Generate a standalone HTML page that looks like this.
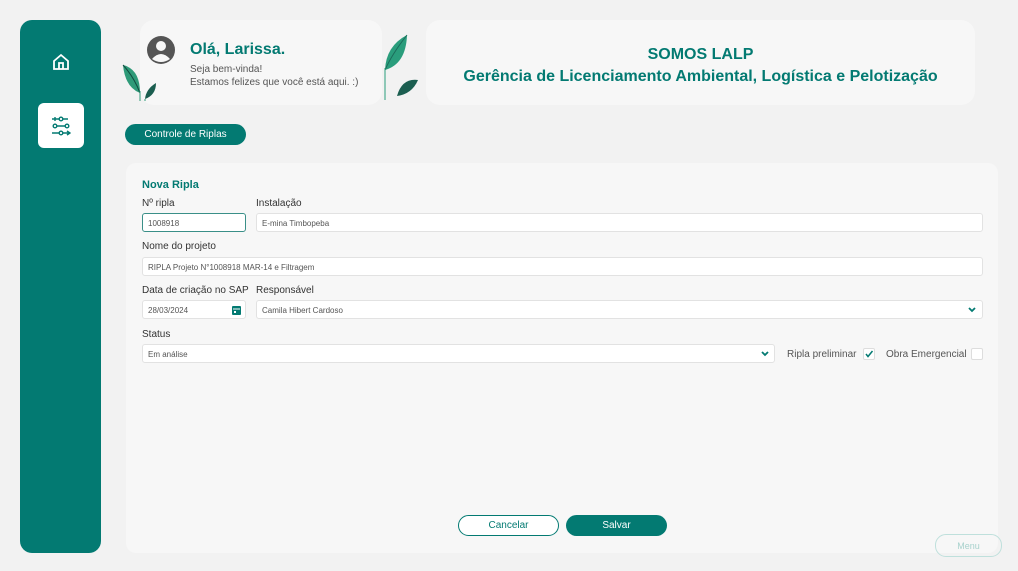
<!DOCTYPE html>
<html><head><meta charset="utf-8"><style>
*{box-sizing:border-box;margin:0;padding:0}
body{width:1018px;height:571px;background:#f2f2f2;font-family:"Liberation Sans",sans-serif;position:relative;overflow:hidden;color:#444}
.abs{position:absolute}
.side{left:20px;top:20px;width:81px;height:533px;background:#037a72;border-radius:12px}
.card{background:#f7f7f7;border-radius:14px}
.teal{color:#037a72}
.lbl{font-size:10px;color:#333}
.inp{background:#fff;border:1px solid #e2e2e2;border-radius:3px;height:19px;font-size:8px;color:#555;padding:5px 0 0 5px}
.btn{border-radius:11px;font-size:10px;text-align:center}
</style></head><body>
<div class="abs side"></div>
<svg class="abs" style="left:52px;top:53px" width="18" height="18" viewBox="0 0 18 18" fill="none" stroke="#fff" stroke-width="1.8"><path d="M2 8L9 2L16 8V16H2Z"/><path d="M7 16V10H11V16"/></svg>
<div class="abs" style="left:38px;top:103px;width:46px;height:45px;background:#fff;border-radius:6px"></div>
<svg class="abs" style="left:51px;top:116px" width="20" height="20" viewBox="0 0 20 20" fill="none" stroke="#037a72" stroke-width="1.4"><circle cx="10" cy="3" r="1.8"/><circle cx="4" cy="10" r="1.8"/><circle cx="10" cy="17" r="1.8"/><circle cx="16" cy="10" r="1.8"/><path d="M1 3H8M12 3H17M6 10H14M1 17H8M12 17H19M4 1V5M16 15L19 17L16 19"/></svg>
<div class="abs card" style="left:140px;top:20px;width:242px;height:85px"></div>
<svg class="abs" style="left:146px;top:35px" width="30" height="30" viewBox="0 0 30 30"><circle cx="15" cy="15" r="14" fill="#555"/><circle cx="15" cy="11" r="5" fill="#f7f7f7"/><path d="M6 24Q15 14 24 24Q15 30 6 24Z" fill="#f7f7f7"/></svg>
<div class="abs teal" style="left:190px;top:41px;font-size:16px;font-weight:bold">Olá, Larissa.</div>
<div class="abs" style="left:190px;top:63px;font-size:10px;color:#555;line-height:13px">Seja bem-vinda!<br>Estamos felizes que você está aqui. :)</div>
<svg class="abs" style="left:120px;top:63px" width="40" height="38" viewBox="0 0 40 38"><path d="M3 2Q20 6 20 30Q5 24 3 2Z" fill="#2e9a78"/><path d="M3 2Q14 14 20 30" stroke="#0f4a3e" stroke-width="1" fill="none"/><path d="M36 20Q36 32 25 36Q26 26 36 20Z" fill="#1b5e50"/><path d="M20 28V38M25 36V38" stroke="#2e9a78"/></svg>
<svg class="abs" style="left:380px;top:34px" width="40" height="66" viewBox="0 0 40 66"><path d="M27 1Q6 12 5 36Q26 30 27 1Z" fill="#2a9d7c"/><path d="M27 1Q12 20 5 36" stroke="#1b6b5a" fill="none"/><path d="M5 34V66" stroke="#2a9d7c"/><path d="M38 46Q22 44 17 62Q32 60 38 46Z" fill="#1b5e50"/></svg>
<div class="abs card" style="left:426px;top:20px;width:549px;height:85px"></div>
<div class="abs teal" style="left:426px;top:44px;width:549px;text-align:center;font-size:16px;font-weight:bold;line-height:22px">SOMOS LALP<br>Gerência de Licenciamento Ambiental, Logística e Pelotização</div>
<div class="abs btn" style="left:125px;top:124px;width:121px;height:21px;background:#037a72;color:#fff;padding-top:5px">Controle de Riplas</div>
<div class="abs card" style="left:126px;top:163px;width:872px;height:390px;border-radius:10px"></div>
<div class="abs teal" style="left:142px;top:179px;font-size:11px;font-weight:bold">Nova Ripla</div>
<div class="abs lbl" style="left:142px;top:198px">Nº ripla</div>
<div class="abs lbl" style="left:256px;top:198px">Instalação</div>
<div class="abs inp" style="left:142px;top:213px;width:104px;border-color:#3a8f88">1008918</div>
<div class="abs inp" style="left:256px;top:213px;width:727px">E-mina Timbopeba</div>
<div class="abs lbl" style="left:142px;top:241px">Nome do projeto</div>
<div class="abs inp" style="left:142px;top:257px;width:841px">RIPLA Projeto N°1008918 MAR-14 e Filtragem</div>
<div class="abs lbl" style="left:142px;top:285px">Data de criação no SAP</div>
<div class="abs lbl" style="left:256px;top:285px">Responsável</div>
<div class="abs inp" style="left:142px;top:300px;width:104px">28/03/2024</div>
<svg class="abs" style="left:232px;top:305px" width="9" height="10" viewBox="0 0 9 10"><rect x="0" y="1" width="9" height="9" rx="1" fill="#037a72"/><rect x="1" y="3.5" width="7" height="1" fill="#fff"/><rect x="2" y="6" width="2" height="2" fill="#fff"/></svg>
<div class="abs inp" style="left:256px;top:300px;width:727px">Camila Hibert Cardoso</div>
<div class="abs lbl" style="left:142px;top:329px">Status</div>
<div class="abs inp" style="left:142px;top:344px;width:633px">Em análise</div>
<svg class="abs" style="left:968px;top:307px" width="8" height="6" viewBox="0 0 8 6"><path d="M1 1L4 4L7 1" stroke="#037a72" stroke-width="1.8" fill="none"/></svg>
<svg class="abs" style="left:761px;top:351px" width="8" height="6" viewBox="0 0 8 6"><path d="M1 1L4 4L7 1" stroke="#037a72" stroke-width="1.8" fill="none"/></svg>
<div class="abs lbl" style="left:787px;top:349px;color:#555">Ripla preliminar</div>
<div class="abs" style="left:863px;top:348px;width:12px;height:12px;background:#fff;border:1px solid #ddd;border-radius:2px"></div>
<svg class="abs" style="left:864px;top:349px" width="10" height="10" viewBox="0 0 10 10"><path d="M2 5L4 7.5L8.5 2" stroke="#037a72" stroke-width="1.5" fill="none"/></svg>
<div class="abs lbl" style="left:886px;top:349px;color:#555">Obra Emergencial</div>
<div class="abs" style="left:971px;top:348px;width:12px;height:12px;background:#fff;border:1px solid #ddd;border-radius:2px"></div>
<div class="abs btn" style="left:458px;top:515px;width:101px;height:21px;background:#fff;border:1.5px solid #037a72;color:#037a72;padding-top:4px">Cancelar</div>
<div class="abs btn" style="left:566px;top:515px;width:101px;height:21px;background:#037a72;color:#fff;padding-top:5px">Salvar</div>
<div class="abs btn" style="left:935px;top:534px;width:67px;height:23px;border:1px solid #bfe0dc;color:#a8d2cd;padding-top:6px;font-size:9px">Menu</div>
</body></html>
